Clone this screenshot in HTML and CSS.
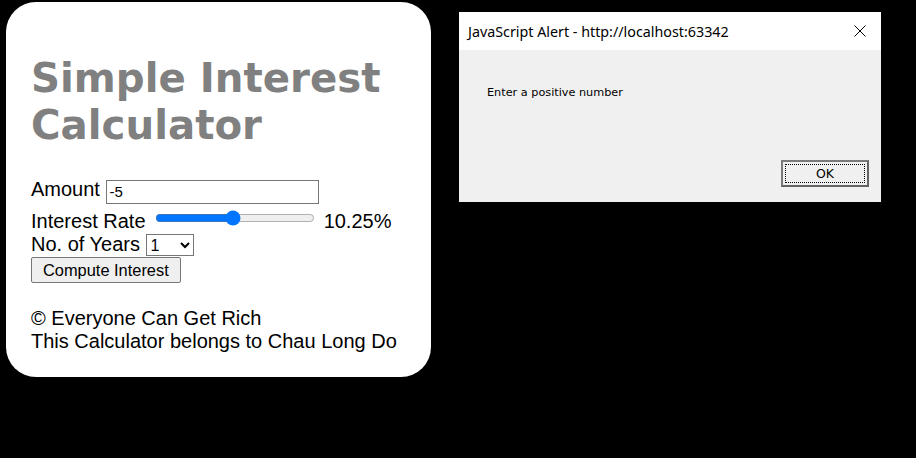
FILE: index.html
```html
<!DOCTYPE html>
<html>
<head>
<meta charset="utf-8">
<link rel="stylesheet" href="styles.css">
</head>
<body>
<div class="card">
  <h1 class="title">Simple Interest Calculator</h1>
  <div class="form">
    <div class="row row-amount">Amount <input class="amount" type="text" value="-5"></div>
    <div class="row row-rate">Interest Rate <input class="rate" type="range" min="1" max="20" step="0.25" value="10.25"> <span class="rate-val">10.25%</span></div>
    <div class="row">No. of Years <select class="years"><option>1</option></select></div>
    <div class="row"><button class="compute">Compute Interest</button></div>
  </div>
  <div class="footer">
    <div>&copy; Everyone Can Get Rich</div>
    <div>This Calculator belongs to Chau Long Do</div>
  </div>
</div>

<div class="dialog">
  <div class="dlg-title">
    <span class="dlg-title-text">JavaScript Alert - http://localhost:63342</span>
    <svg class="dlg-close" width="12" height="12" viewBox="0 0 12 12"><path d="M0.5 0.5 L11.5 11.5 M11.5 0.5 L0.5 11.5" stroke="#000" stroke-width="1" fill="none"/></svg>
  </div>
  <div class="dlg-body">
    <div class="dlg-msg">Enter a positive number</div>
    <div class="dlg-actions"><div class="ok"><span class="ok-focus">OK</span></div></div>
  </div>
</div>
</body>
</html>
```
FILE: styles.css
```css
html, body {
  margin: 0;
  padding: 0;
  background: #000;
}
body {
  padding: 2px 0 0 6px;
  height: 456px;
  font-family: "Liberation Sans", Arial, sans-serif;
}
.card {
  width: 375px;
  background: #fff;
  border-radius: 30px;
  padding: 26px 25px 24px 25px;
  font-size: 20px;
  color: #000;
}
.title {
  font-family: "DejaVu Sans", Verdana, sans-serif;
  font-weight: bold;
  font-size: 40.3px;
  color: #808080;
  margin: 27px 0 27px 0;
  line-height: 47px;
}
.row {
  line-height: 23px;
}
.row-amount {
  padding-top: 2px;
}
.row-rate {
  padding-top: 4px;
}
.amount {
  width: 207px;
  height: 20px;
  font-family: "Liberation Sans", Arial, sans-serif;
  font-size: 15px;
  border: 1px solid #767676;
  padding: 1px 2px;
  margin: 0 0 2px 1px;
  vertical-align: -1px;
}
.rate {
  width: 160px;
  margin: 0 2px 0 4px;
  accent-color: #0075ff;
  vertical-align: 2px;
}
.rate-val {
  margin-left: 1px;
}
.years {
  font-family: "Liberation Sans", Arial, sans-serif;
  font-size: 16px;
  height: 22px;
  width: 48px;
  border: 1px solid #767676;
  border-radius: 0;
  background: #fff;
  vertical-align: 0px;
}
.compute {
  font-family: "Liberation Sans", Arial, sans-serif;
  font-size: 16.4px;
  height: 26px;
  padding: 1px 11px;
  margin-top: 1px;
  border: 1px solid #767676;
  border-radius: 2px;
  background: #efefef;
  color: #000;
}
.footer {
  margin-top: 24px;
  line-height: 23px;
}
.dialog {
  position: absolute;
  left: 459px;
  top: 12px;
  width: 422px;
  height: 190px;
  background: #f0f0f0;
  display: flex;
  flex-direction: column;
}
.dlg-title {
  height: 38px;
  background: #fff;
  display: flex;
  align-items: center;
  justify-content: space-between;
  padding: 0 15px 0 9px;
}
.dlg-title-text {
  font-family: "Noto Sans", "Open Sans", sans-serif;
  font-size: 14.3px;
  color: #000;
}
.dlg-body {
  flex: 1;
  display: flex;
  flex-direction: column;
  justify-content: space-between;
  padding: 36px 12px 15px 28px;
}
.dlg-msg {
  font-family: "DejaVu Sans", Tahoma, sans-serif;
  font-size: 11.25px;
  color: #000;
}
.dlg-actions {
  display: flex;
  justify-content: flex-end;
}
.ok {
  width: 80px;
  height: 19px;
  border: 2px solid #646464;
  border-top-color: #7a7a7a;
  border-left-color: #7a7a7a;
  background: #f0f0f0;
  padding: 2px;
  box-sizing: content-box;
  display: flex;
}
.ok-focus {
  flex: 1;
  border: 1px dotted #000;
  display: flex;
  align-items: center;
  justify-content: center;
  font-family: "DejaVu Sans", Tahoma, sans-serif;
  font-size: 12.5px;
  color: #000;
}
```
